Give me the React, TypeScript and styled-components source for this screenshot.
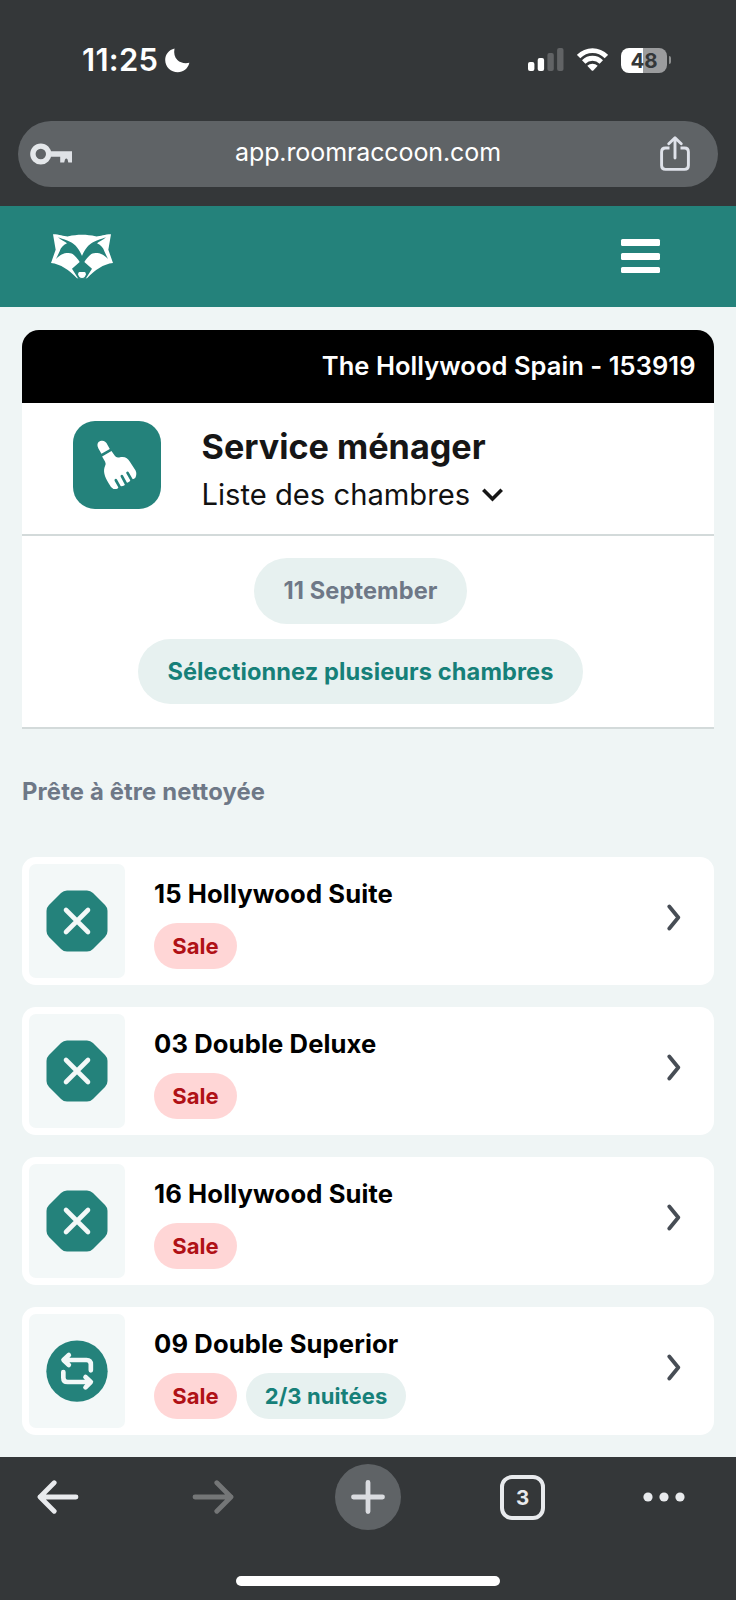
import React from 'react';
import styled, { createGlobalStyle } from 'styled-components';

const TEAL = '#24827b';
const INK = '#343739';

const GlobalStyle = createGlobalStyle`
  * { box-sizing: border-box; }
  body { margin: 0; background: #eff5f5; }
  svg { display: block; flex: none; }
`;

const Screen = styled.div`
  width: 736px;
  height: 1600px;
  display: flex;
  flex-direction: column;
  overflow: hidden;
  background: #eff5f5;
  font-family: Inter, sans-serif;
  color: #000;
`;

const BrowserTop = styled.div`
  height: 205.5px;
  flex: none;
  background: ${INK};
`;

const StatusBar = styled.div`
  height: 121px;
  padding: 0 65px 1px 82px;
  display: flex;
  align-items: center;
  color: #fff;
`;

const Clock = styled.span`
  font-size: 31px;
  font-weight: 600;
  line-height: 40px;
  letter-spacing: 0.3px;
  width: 82.5px;
  white-space: nowrap;
`;

const Indicators = styled.div`
  margin-left: auto;
  display: flex;
  align-items: center;
`;

const Battery = styled.div`
  width: 46px;
  height: 25px;
  margin-left: 13.5px;
  border-radius: 8px;
  background: linear-gradient(90deg, #fff 22px, #9b9c9e 22px);
  color: ${INK};
  font-size: 20.5px;
  font-weight: 700;
  line-height: 25px;
  text-align: center;
`;

const BatteryTip = styled.div`
  width: 2.5px;
  height: 8px;
  margin-left: 1.5px;
  border-radius: 0 3px 3px 0;
  background: #8d8f90;
`;

const AddressBar = styled.div`
  height: 65.5px;
  margin: 0 18px;
  padding: 0 28px 0 12px;
  border-radius: 33px;
  background: #5f6366;
  display: flex;
  align-items: center;
  justify-content: space-between;
`;

const Address = styled.span`
  color: #fff;
  font-size: 25px;
  line-height: 32px;
  letter-spacing: -0.1px;
  padding: 0 0 4px 3px;
`;

const AppHeader = styled.header`
  height: 101.5px;
  flex: none;
  padding: 0 76px 0 51px;
  display: flex;
  align-items: center;
  justify-content: space-between;
  background: ${TEAL};
`;

const MenuButton = styled.div`
  width: 39px;
  display: flex;
  flex-direction: column;
  gap: 7px;
`;

const MenuLine = styled.span`
  height: 6.8px;
  border-radius: 1.5px;
  background: #fff;
`;

const Main = styled.main`
  flex: 1;
  min-height: 0;
  padding: 22.5px 22px 0;
`;

const Panel = styled.section`
  background: #fff;
  border-radius: 17px 17px 0 0;
  overflow: hidden;
  border-bottom: 2px solid #d3dada;
`;

const HotelName = styled.div`
  height: 73px;
  padding-right: 18.5px;
  background: #000;
  color: #fff;
  font-size: 25.5px;
  font-weight: 600;
  line-height: 72px;
  letter-spacing: 0.05px;
  text-align: right;
`;

const ServiceRow = styled.div`
  height: 133px;
  padding: 18.5px 0 0 51px;
  display: flex;
  border-bottom: 2px solid #d3dada;
`;

const ServiceIcon = styled.div`
  width: 88px;
  height: 88px;
  flex: none;
  border-radius: 22px;
  background: ${TEAL};
`;

const ServiceText = styled.div`
  margin-left: 40.5px;
`;

const Title = styled.h1`
  margin: 5px 0 0;
  color: #161616;
  font-size: 34.2px;
  font-weight: 700;
  line-height: 42px;
`;

const SubTitle = styled.div`
  margin-top: 8px;
  display: flex;
  align-items: center;
  gap: 11.5px;
  color: #111;
  font-size: 29.2px;
  line-height: 38px;
`;

const Filters = styled.div`
  height: 191.5px;
  padding: 22.5px 15px 0 0;
  display: flex;
  flex-direction: column;
  align-items: center;
  gap: 15px;
`;

const Pill = styled.div<{ $width: number; $color: string }>`
  width: ${(p) => p.$width}px;
  height: 65.5px;
  border-radius: 33px;
  background: #e7f1f0;
  color: ${(p) => p.$color};
  font-size: 23.6px;
  font-weight: 700;
  line-height: 65px;
  letter-spacing: 0.1px;
  text-align: center;
`;

const SectionTitle = styled.h2`
  margin: 46px 0 0;
  height: 82px;
  color: #6e7887;
  font-size: 23.8px;
  font-weight: 700;
  line-height: 34px;
  letter-spacing: 0.15px;
`;

const Rooms = styled.div`
  display: flex;
  flex-direction: column;
  gap: 22px;
`;

const RoomCard = styled.article`
  height: 128px;
  padding: 7px 33px 7px 7px;
  display: flex;
  border-radius: 14px;
  background: #fff;
`;

const RoomState = styled.div`
  width: 95.5px;
  height: 113.5px;
  padding: 0 0 0 17px;
  display: flex;
  align-items: center;
  border-radius: 7px;
  background: #f3f8f8;
`;

const RoomInfo = styled.div`
  flex: 1;
  margin-left: 29.5px;
`;

const RoomName = styled.h3`
  margin: 14.5px 0 14.5px;
  font-size: 25.6px;
  font-weight: 700;
  line-height: 30px;
  letter-spacing: 0.12px;
`;

const Badges = styled.div`
  display: flex;
  gap: 9px;
`;

const Badge = styled.span<{ $tone: 'dirty' | 'stay' }>`
  width: ${(p) => (p.$tone === 'dirty' ? 83 : 160)}px;
  height: 45.5px;
  border-radius: 23px;
  background: ${(p) => (p.$tone === 'dirty' ? '#ffd6d6' : '#e7f1f0')};
  color: ${(p) => (p.$tone === 'dirty' ? '#b01116' : '#168079')};
  font-size: 22px;
  font-weight: 700;
  line-height: 46px;
  letter-spacing: 0.1px;
  text-align: center;
`;

const Chevron = styled.svg`
  margin-top: 40px;
`;

const BrowserBottom = styled.nav`
  height: 143.5px;
  flex: none;
  display: flex;
  flex-direction: column;
  align-items: center;
  background: ${INK};
`;

const Toolbar = styled.div`
  width: 100%;
  height: 66px;
  margin-top: 7.5px;
  padding: 0 51px 0 37px;
  display: grid;
  grid-template-columns: 155px 143px 165px 143px 42px;
  align-items: center;
`;

const NewTab = styled.div`
  width: 66px;
  height: 66px;
  border-radius: 50%;
  display: flex;
  align-items: center;
  justify-content: center;
  background: #5f6366;
`;

const TabCount = styled.div`
  width: 45px;
  height: 45px;
  border: 4px solid #e8eaed;
  border-radius: 12px;
  color: #e8eaed;
  font-size: 20.5px;
  font-weight: 700;
  line-height: 38px;
  text-align: center;
`;

const HomeIndicator = styled.div`
  width: 264px;
  height: 10px;
  margin-top: 46px;
  border-radius: 5px;
  background: #fff;
`;

const Moon = () => (
  <svg width="25" height="25" viewBox="0 0 25 25">
    <path d="M9.5 .4 C8.6 5.2 9.6 9.2 12.4 12 C15.2 14.8 19.6 15.8 24.4 14.8 C22.8 20.8 18.3 24.3 12.8 24.3 C5.8 24.3 .2 18.8 .2 12 C.2 6.400 3.9 1.700 9.5 .4 Z" fill="#fff" />
  </svg>
);

const Signal = () => (
  <svg width="37" height="24" viewBox="0 0 37 24">
    <rect x="0" y="14" width="6.4" height="9" rx="2" fill="#fff" />
    <rect x="9.7" y="10" width="6.4" height="13" rx="2" fill="#fff" />
    <rect x="19.4" y="5" width="6.4" height="18" rx="2" fill="#616365" />
    <rect x="29.1" y="0" width="6.4" height="23" rx="2" fill="#616365" />
  </svg>
);

const WifiIcon = styled.svg`
  margin-left: 12px;
`;

const Wifi = () => (
  <WifiIcon width="31" height="24" viewBox="0 0 31 24">
    <g fill="none" stroke="#fff" strokeWidth="4.8">
      <path d="M1.6 8.6 C9.5 .6 21.5 .6 29.4 8.6" />
      <path d="M6.7 14 C11.7 9 19.3 9 24.3 14" />
    </g>
    <path d="M10.3 17.8 C13.3 15 17.7 15 20.7 17.8 L16.3 22.4 Q15.5 23.2 14.7 22.4 Z" fill="#fff" />
  </WifiIcon>
);

const Key = () => (
  <svg width="43" height="22" viewBox="0 0 43 22">
    <circle cx="10.8" cy="11" r="7.9" fill="none" stroke="#e4e7ea" strokeWidth="5.4" />
    <path d="M20 8.3 H42 V19.6 H38.3 L37.6 16.5 Q36.3 14.5 35 16.5 L34.2 19.6 H30.2 V13.7 H20 Z" fill="#dfe2e6" />
  </svg>
);

const Share = () => (
  <svg width="30" height="36" viewBox="0 0 30 36" fill="none" stroke="#dfe2ea" strokeWidth="2.9" strokeLinecap="round" strokeLinejoin="round">
    <path d="M9.5 12 H5.5 Q1.6 12 1.6 16 V29.5 Q1.6 33.4 5.5 33.4 H24.5 Q28.4 33.4 28.4 29.5 V16 Q28.4 12 24.5 12 H20.5" strokeLinecap="butt" />
    <path d="M15 22 V2.5 M8.8 7.8 L15 1.8 L21.2 7.8" />
  </svg>
);

const maskPath =
  'M174 110 C184 119 195 123 201 128 C189 134 182 142 179 152 L168 175 C179 164 188 158 200 157 C208 157 214 157 218 160 C226 166 234 175 239 184 L216 204 L235 234 L247 234 L247 168 C238 147 227 132 213 125 C200 118 188 116 174 110 Z';

const Raccoon = () => (
  <svg width="62" height="44.7" viewBox="153 100 186 134">
    <path
      d="M159 101 C180 101 192 108 206 107 C230 101 262 101 286 107 C300 108 312 101 333 101 L325 147 L339 187 C310 190 285 208 261 233 L231 233 C207 208 182 190 153 187 L167 147 Z"
      fill="#fff"
    />
    <path d={maskPath} fill={TEAL} />
    <path d={maskPath} fill={TEAL} transform="translate(492 0) scale(-1 1)" />
    <path d="M238 214 H254 Q258 215 257.5 221 Q256 232 246 232 Q236 232 234.5 221 Q234 215 238 214 Z" fill="#fff" />
  </svg>
);

const Brush = () => (
  <svg width="88" height="88" viewBox="220 663 263 263">
    <g fill="#fff">
      <path d="M296 745 C289 731 296 723 305 722 C312 721 317 724 320 729 L330 747 L305 761 Z" />
      <path d="M307 769 L335 753 L345 767 Q349 774 358 772 C374 768 383 773 390 785 L407 811 Q412 821 406 833 Q400 838 393 837 Q390 847 379 848 L373 856 Q366 859 358 857 Q354 869 341 866 Q333 862 326 848 C314 829 309 812 316 797 Q319 791 316 785 Z" />
    </g>
    <g stroke={TEAL} strokeWidth="8" strokeLinecap="round">
      <path d="M383 818 L395 839" />
      <path d="M366 828 L379 852" />
      <path d="M348 840 L361 863" />
    </g>
  </svg>
);

const DownChevron = () => (
  <svg width="21" height="14" viewBox="0 0 21 14" fill="none" stroke="#161616" strokeWidth="3.6">
    <path d="M1.3 1.8 L10.5 11 L19.7 1.8" />
  </svg>
);

const BlockedIcon = () => (
  <svg width="62" height="62" viewBox="0 0 62 62">
    <path
      d="M21 .5 H41 Q44.5 .5 47 3 L59 15 Q61.5 17.5 61.5 21 V41 Q61.5 44.5 59 47 L47 59 Q44.5 61.5 41 61.5 H21 Q17.5 61.5 15 59 L3 47 Q.5 44.5 .5 41 V21 Q.5 17.5 3 15 L15 3 Q17.5 .5 21 .5 Z"
      fill={TEAL}
    />
    <path d="M20 20 L42 42 M42 20 L20 42" stroke="#f3f8f8" strokeWidth="4.6" strokeLinecap="round" />
  </svg>
);

const StayIcon = () => (
  <svg width="62" height="62" viewBox="137.5 150 186 186">
    <circle cx="230.5" cy="243.5" r="92" fill={TEAL} />
    <g fill="none" stroke="#f3f8f8" strokeWidth="14" strokeLinecap="round" strokeLinejoin="round">
      <path d="M272 241 V223 Q272 210 259 210 H191 M206 195 L190 210 L206 225" />
      <path d="M189.5 246 V263 Q189.5 276 202.5 276 H270 M256 261 L272 276 L256 292" />
    </g>
  </svg>
);

const Back = () => (
  <svg width="42" height="34" viewBox="0 0 42 34" fill="none" stroke="#e8eaed" strokeWidth="4.8" strokeLinecap="round" strokeLinejoin="round">
    <path d="M39 17 H3 M17.2 2.8 L3 17 L17.2 31.2" />
  </svg>
);

const Forward = () => (
  <svg width="42" height="34" viewBox="0 0 42 34" fill="none" stroke="#747677" strokeWidth="4.8" strokeLinecap="round" strokeLinejoin="round">
    <path d="M3 17 H39 M24.8 2.8 L39 17 L24.8 31.2" />
  </svg>
);

const Plus = () => (
  <svg width="34" height="34" viewBox="0 0 34 34" stroke="#dadce0" strokeWidth="4.8" strokeLinecap="round">
    <path d="M17 2.5 V31.5 M2.5 17 H31.5" />
  </svg>
);

const More = () => (
  <svg width="42" height="10" viewBox="0 0 42 10" fill="#e8eaed">
    <circle cx="5" cy="5" r="4.6" />
    <circle cx="21" cy="5" r="4.6" />
    <circle cx="37" cy="5" r="4.6" />
  </svg>
);

const rooms = [
  { name: '15 Hollywood Suite', stay: '' },
  { name: '03 Double Deluxe', stay: '' },
  { name: '16 Hollywood Suite', stay: '' },
  { name: '09 Double Superior', stay: '2/3 nuitées' },
];

export default function App() {
  return (
    <Screen>
      <GlobalStyle />
      <BrowserTop>
        <StatusBar>
          <Clock>11:25</Clock>
          <Moon />
          <Indicators>
            <Signal />
            <Wifi />
            <Battery>48</Battery>
            <BatteryTip />
          </Indicators>
        </StatusBar>
        <AddressBar>
          <Key />
          <Address>app.roomraccoon.com</Address>
          <Share />
        </AddressBar>
      </BrowserTop>

      <AppHeader>
        <Raccoon />
        <MenuButton>
          <MenuLine />
          <MenuLine />
          <MenuLine />
        </MenuButton>
      </AppHeader>

      <Main>
        <Panel>
          <HotelName>The Hollywood Spain - 153919</HotelName>
          <ServiceRow>
            <ServiceIcon>
              <Brush />
            </ServiceIcon>
            <ServiceText>
              <Title>Service ménager</Title>
              <SubTitle>
                Liste des chambres
                <DownChevron />
              </SubTitle>
            </ServiceText>
          </ServiceRow>
          <Filters>
            <Pill $width={212.5} $color="#6e7887">11 September</Pill>
            <Pill $width={445.5} $color="#168079">Sélectionnez plusieurs chambres</Pill>
          </Filters>
        </Panel>

        <SectionTitle>Prête à être nettoyée</SectionTitle>
        <Rooms>
          {rooms.map((room) => (
            <RoomCard key={room.name}>
              <RoomState>{room.stay ? <StayIcon /> : <BlockedIcon />}</RoomState>
              <RoomInfo>
                <RoomName>{room.name}</RoomName>
                <Badges>
                  <Badge $tone="dirty">Sale</Badge>
                  {room.stay && <Badge $tone="stay">{room.stay}</Badge>}
                </Badges>
              </RoomInfo>
              <Chevron width="14" height="27" viewBox="0 0 14 27" fill="none" stroke="#474d55" strokeWidth="3.8" strokeLinecap="round" strokeLinejoin="round">
                <path d="M2.3 2.5 L11.3 13.5 L2.3 24.5" />
              </Chevron>
            </RoomCard>
          ))}
        </Rooms>
      </Main>

      <BrowserBottom>
        <Toolbar>
          <Back />
          <Forward />
          <NewTab>
            <Plus />
          </NewTab>
          <TabCount>3</TabCount>
          <More />
        </Toolbar>
        <HomeIndicator />
      </BrowserBottom>
    </Screen>
  );
}
